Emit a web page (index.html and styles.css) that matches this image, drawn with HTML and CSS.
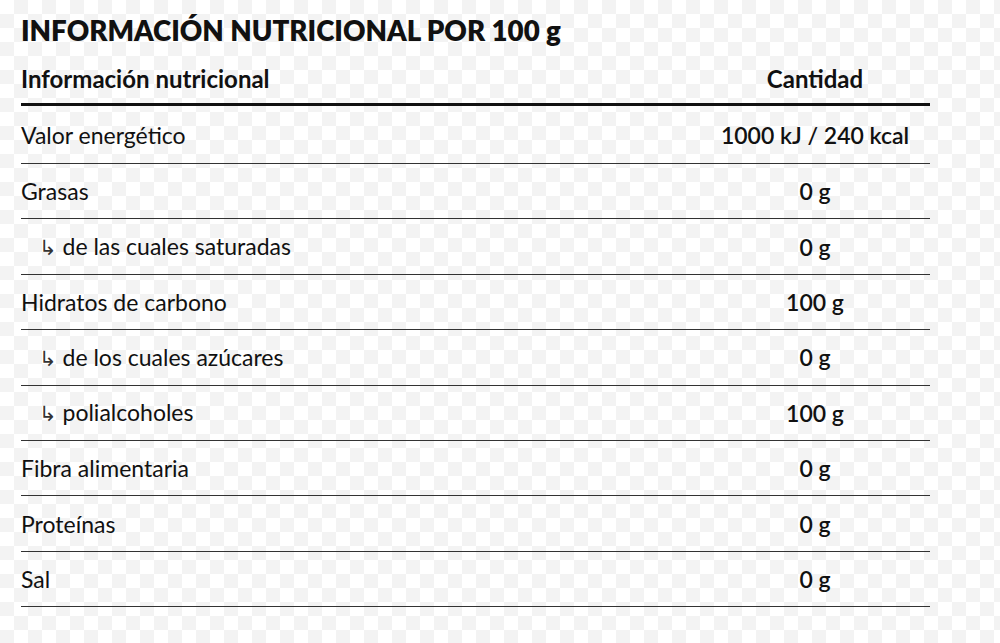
FILE: index.html
```html
<!DOCTYPE html>
<html lang="es">
<head>
<meta charset="utf-8">
<link rel="stylesheet" href="styles.css">
</head>
<body>
<div class="page">
  <h1 class="title">INFORMACIÓN NUTRICIONAL POR 100 g</h1>
  <table class="nt">
    <thead>
      <tr><th class="name">Información nutricional</th><th class="qty">Cantidad</th></tr>
    </thead>
    <tbody>
      <tr class="first"><td class="name">Valor energético</td><td class="qty">1000 kJ / 240 kcal</td></tr>
      <tr><td class="name">Grasas</td><td class="qty">0 g</td></tr>
      <tr><td class="name sub"><span class="arr">↳</span> de las cuales saturadas</td><td class="qty">0 g</td></tr>
      <tr><td class="name">Hidratos de carbono</td><td class="qty">100 g</td></tr>
      <tr><td class="name sub"><span class="arr">↳</span> de los cuales azúcares</td><td class="qty">0 g</td></tr>
      <tr><td class="name sub"><span class="arr">↳</span> polialcoholes</td><td class="qty">100 g</td></tr>
      <tr><td class="name">Fibra alimentaria</td><td class="qty">0 g</td></tr>
      <tr><td class="name">Proteínas</td><td class="qty">0 g</td></tr>
      <tr><td class="name">Sal</td><td class="qty">0 g</td></tr>
    </tbody>
  </table>
</div>
</body>
</html>
```
FILE: styles.css
```css
html, body {
  margin: 0;
  padding: 0;
}
body {
  width: 1000px;
  height: 643px;
  overflow: hidden;
  background-color: #ffffff;
  background-image:
    linear-gradient(45deg, #f3f3f3 25%, transparent 25%, transparent 75%, #f3f3f3 75%),
    linear-gradient(45deg, #f3f3f3 25%, transparent 25%, transparent 75%, #f3f3f3 75%);
  background-size: 28px 28px;
  background-position: 0 0, 14px 14px;
  font-family: Lato, "Open Sans", sans-serif;
  color: #111;
}
.page {
  padding: 14px 70px 0 21px;
}
.title {
  margin: 0;
  font-size: 27.7px;
  font-weight: 800;
  line-height: 34px;
}
.nt {
  width: 909px;
  border-collapse: collapse;
  margin-top: 0;
}
.nt th {
  font-size: 24px;
  font-weight: 700;
  height: 48px;
  padding: 7px 0 0 0;
  border-bottom: 3px solid #111;
  vertical-align: middle;
  line-height: 28px;
}
.nt th.name { text-align: left; }
.nt td {
  font-size: 23px;
  height: 54.4px;
  padding: 0;
  border-bottom: 1px solid #333;
  vertical-align: middle;
  line-height: 28px;
}
.nt tr.first td { height: 57px; }
.nt td.name { text-align: left; }
.nt .qty {
  text-align: center;
  width: 230px;
}
.nt td.qty { font-weight: 600; }
.nt td.sub { padding-left: 18px; }
.arr {
  font-family: "Noto Sans", "DejaVu Sans", sans-serif;
  font-size: 21px;
  color: #333;
  margin-right: 0;
}
```
